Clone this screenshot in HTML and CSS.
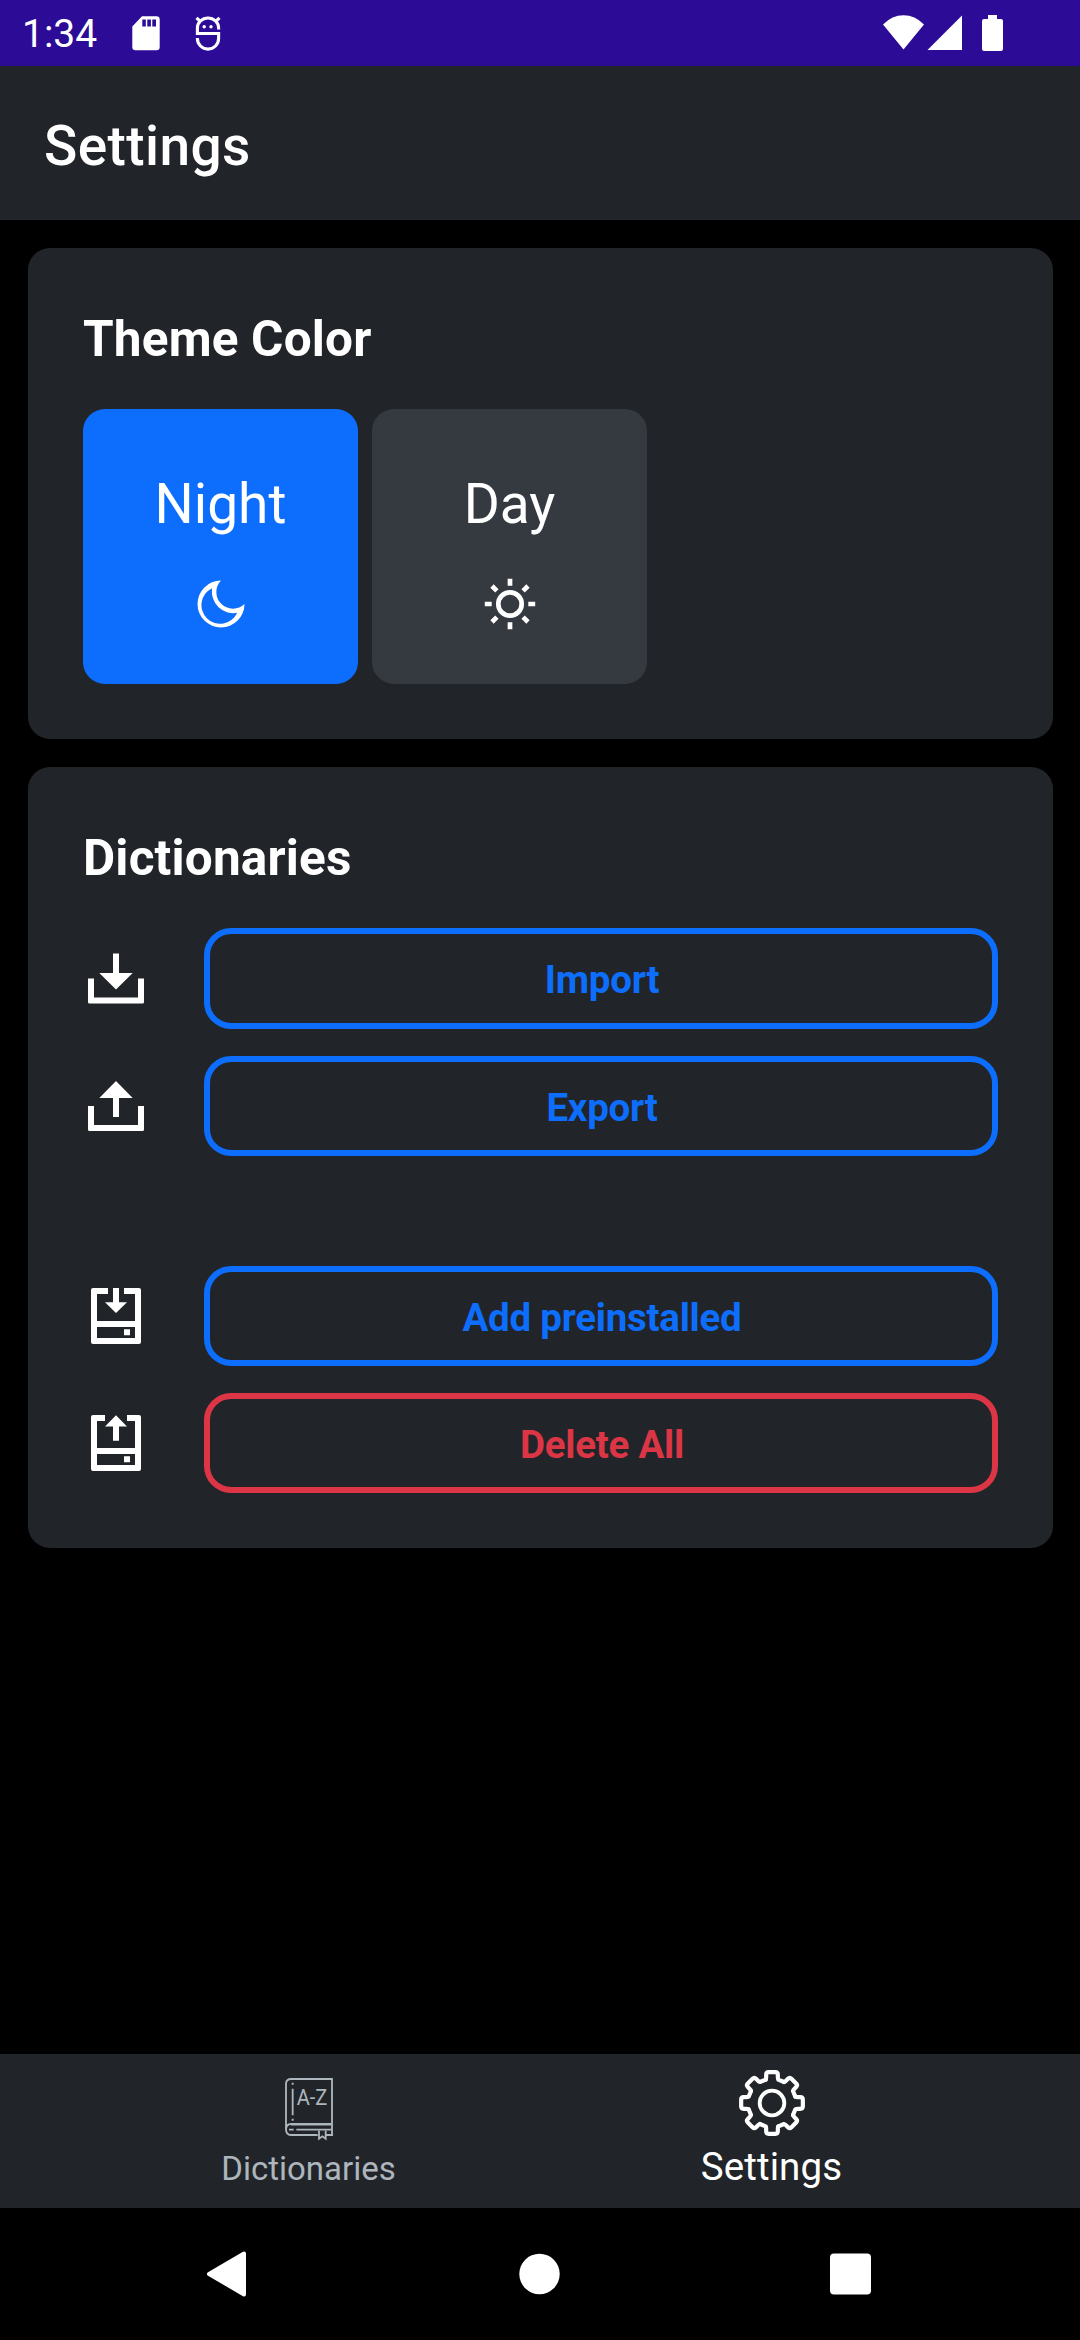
FILE: index.html
```html
<!DOCTYPE html>
<html lang="en">
<head>
<meta charset="utf-8">
<title>Settings</title>
<link rel="stylesheet" href="styles.css">
</head>
<body>
<div class="screen">
  <div class="status">
    <span class="clock">1:34</span>
    <svg class="sd" width="28" height="35" viewBox="0 0 28 35"><path fill="#fff" fill-rule="evenodd" d="M10 .3H24.500a3.200 3.200 0 0 1 3.200 3.200V31a3.200 3.200 0 0 1-3.200 3.200H3.500A3.200 3.200 0 0 1 .3 31V10.500ZM10.300 3.500v7h3.500v-7Zm5 0v7h3.600v-7Zm5 0v7h3.700v-7Z"/></svg>
    <svg class="bug" width="26" height="35" viewBox="0 0 26 35" fill="none" stroke="#fff" stroke-width="3.100"><path d="M23.600 13.500V12A10.600 10 0 0 0 2.400 12V17.500H23.600V22.500A10.600 10.600 0 0 1 2.400 22.500V22M1.500 1.800 5.500 5.500M24.500 1.800 20.500 5.500"/><circle cx="9.200" cy="10.700" r="1.700" fill="#fff" stroke="none"/><circle cx="16" cy="10.700" r="1.700" fill="#fff" stroke="none"/></svg>
    <svg class="radio" width="122" height="36" viewBox="0 0 122 36" fill="#fff"><path d="M0 9.500Q9 .3 20.500 .3T41 9.500L20.500 34.500ZM44.500 35 79 .5V35ZM105 0H114V4H118a2 2 0 0 1 2 2V34a2 2 0 0 1-2 2H101a2 2 0 0 1-2-2V6a2 2 0 0 1 2-2H105Z"/></svg>
  </div>
  <header class="appbar">Settings</header>
  <main class="content">
    <section class="card">
      <h2 class="title">Theme Color</h2>
      <div class="tiles">
        <div class="tile selected">
          <span>Night</span>
          <svg width="66" height="66" viewBox="187.500 571.500 66 66"><path fill="#fff" fill-rule="evenodd" d="M220.500 581A23.500 23.500 0 1 0 244 604.500 16.620 16.620 0 0 1 220.500 581ZM211.700 588.700A18.700 18.700 0 1 0 236.700 613.300 21.400 21.400 0 0 1 211.700 588.700Z"/></svg>
        </div>
        <div class="tile">
          <span>Day</span>
          <svg width="66" height="66" viewBox="-33 -33 66 66" fill="none" stroke="#fff" stroke-width="4.700"><circle r="11.700"/><path d="M0-25.200V-18.300M0 18.300V25.200M-25.200 0H-18.300M18.300 0H25.200M-18-18-13.100-13.100M18-18 13.100-13.100M-18 18-13.100 13.100M18 18 13.100 13.100"/></svg>
        </div>
      </div>
    </section>
    <section class="card">
      <h2 class="title">Dictionaries</h2>
      <div class="rows">
        <div class="row tall">
          <svg width="66" height="66" viewBox="0 .5 66 66" fill="#fff"><path d="M30 8H36V27.500H49.700L33 44 16.300 27.500H30ZM5 33H11V52H55V33H61V56.500a1.500 1.500 0 0 1-1.500 1.500H6.500A1.500 1.500 0 0 1 5 56.500Z"/></svg>
          <button class="btn">Import</button>
        </div>
        <div class="row">
          <svg width="66" height="66" viewBox="0 0 66 66" fill="#fff"><path d="M33 8 49.700 25H36V44H30V25H16.300ZM5 33H11V52H55V33H61V56.500a1.500 1.500 0 0 1-1.500 1.500H6.500A1.500 1.500 0 0 1 5 56.500Z"/></svg>
          <button class="btn">Export</button>
        </div>
        <div class="row spaced">
          <svg width="66" height="66" viewBox="0 0 66 66" fill="#fff"><path fill-rule="evenodd" d="M25 5V11H14V38H52V11H41V5H56a2 2 0 0 1 2 2V59a2 2 0 0 1-2 2H10a2 2 0 0 1-2-2V7a2 2 0 0 1 2-2ZM14 44V55H52V44ZM41 46.200H47V52.300H41Z"/><path d="M30 5H36V19.300H44L33 30 22 19.300H30Z"/></svg>
          <button class="btn">Add preinstalled</button>
        </div>
        <div class="row">
          <svg width="66" height="66" viewBox="0 0 66 66" fill="#fff"><path fill-rule="evenodd" d="M22 5V11H14V38H52V11H44V5H56a2 2 0 0 1 2 2V59a2 2 0 0 1-2 2H10a2 2 0 0 1-2-2V7a2 2 0 0 1 2-2ZM14 44V55H52V44ZM41 46.200H47V52.300H41Z"/><path d="M33 5.300 44 16.500H36V30.700H30V16.500H22Z"/></svg>
          <button class="btn danger">Delete All</button>
        </div>
      </div>
    </section>
  </main>
  <nav class="tabs">
    <div class="tab">
      <svg width="50" height="64" viewBox="249 111 150 192" fill="none" stroke="#adb5bd" stroke-width="5.500">
        <path d="M255 270V132Q255 117 271 117H393V285M255 270Q255 252 270 252H393M255 268Q255 285 270 285H350M376 285H396M286 269H393M264 269H278M275 146V226M354 272V296L364 289 374 296V272"/>
        <path d="M270 255H392" stroke-width="3"/>
        <path d="M275 128V134M275 236V242" stroke-width="6"/>
        <text x="287" y="196" font-size="64" textLength="92" lengthAdjust="spacingAndGlyphs" fill="#adb5bd" stroke="none" class="az">A-Z</text>
      </svg>
      <span>Dictionaries</span>
    </div>
    <div class="tab active">
      <svg width="68" height="68" viewBox="-102 -102 204 204" fill="none" stroke="#fff" stroke-width="12.500" stroke-linejoin="round" stroke-linecap="round">
        <defs><path id="tooth" d="M-19-70Q-17.500-72-17.500-78V-85Q-17.500-92.500-10-92.500H10Q17.500-92.500 17.500-85V-78Q17.500-72 19-70L36-63"/></defs>
        <use href="#tooth"/><use href="#tooth" transform="rotate(45)"/><use href="#tooth" transform="rotate(90)"/><use href="#tooth" transform="rotate(135)"/><use href="#tooth" transform="rotate(180)"/><use href="#tooth" transform="rotate(225)"/><use href="#tooth" transform="rotate(270)"/><use href="#tooth" transform="rotate(315)"/>
        <circle r="37" stroke-width="11.500"/>
      </svg>
      <span>Settings</span>
    </div>
  </nav>
  <div class="sysnav">
    <svg width="42" height="46" viewBox="0 0 42 46"><path fill="#fff" stroke="#fff" stroke-width="4" stroke-linejoin="round" d="M3 23 38 2.500V43.500Z"/></svg>
    <svg width="42" height="46" viewBox="0 0 42 46"><circle cx="21.500" cy="23" r="20.200" fill="#fff"/></svg>
    <svg width="42" height="46" viewBox="0 0 42 46"><rect x="0" y="2.500" width="41" height="41" rx="4" fill="#fff"/></svg>
  </div>
</div>
</body>
</html>
```
FILE: styles.css
```css
* { box-sizing: border-box; }
body {
  margin: 0;
  background: #000;
  color: #fff;
  font-family: Roboto, "Liberation Sans", sans-serif;
}
svg { display: block; flex: none; }
.screen {
  width: 1080px;
  height: 2340px;
  display: flex;
  flex-direction: column;
}
.status {
  height: 66px;
  padding: 0 75px 0 22px;
  background: #2c0b97;
  display: flex;
  align-items: center;
}
.clock {
  width: 110px;
  font-size: 39px;
  line-height: 46px;
  padding-top: 2px;
}
.bug { margin-left: 35px; }
.radio { margin-left: auto; }
.appbar {
  height: 154px;
  padding: 6px 44px 0;
  background: #212529;
  font-size: 55px;
  font-weight: 500;
  letter-spacing: 0.4px;
  line-height: 148px;
}
.content {
  flex: 1;
  padding: 28px 27px 0 28px;
  display: flex;
  flex-direction: column;
  gap: 28px;
}
.card {
  background: #212529;
  border-radius: 22px;
  padding: 55px;
}
.title {
  margin: 0 0 34px;
  font-size: 49.5px;
  font-weight: 700;
  letter-spacing: 0.18px;
  line-height: 72px;
}
.tiles { display: flex; gap: 14px; }
.tile {
  width: 275px;
  height: 275px;
  border-radius: 22px;
  background: #343a40;
  padding-top: 58px;
  display: flex;
  flex-direction: column;
  align-items: center;
  gap: 30px;
  font-size: 55px;
  line-height: 74px;
}
.tile.selected { background: #0d6efd; }
.rows { display: flex; flex-direction: column; gap: 27px; }
.row {
  height: 100px;
  display: flex;
  align-items: center;
  gap: 55px;
}
.row.tall { height: 101px; }
.row.spaced { margin-top: 83px; }
.btn {
  flex: 1;
  align-self: stretch;
  padding: 3px 0 0 2px;
  border: 6px solid #0d6efd;
  border-radius: 27px;
  background: none;
  color: #0d6efd;
  font: 700 38.5px/48px Roboto, "Liberation Sans", sans-serif;
  letter-spacing: -0.25px;
}
.btn.danger { border-color: #dc3545; color: #dc3545; }
.tabs {
  height: 154px;
  padding: 0 77px;
  background: #212529;
  display: flex;
}
.tab {
  flex: 1;
  padding-top: 23px;
  display: flex;
  flex-direction: column;
  align-items: center;
  gap: 8px;
  color: #adb5bd;
  font-size: 33px;
  line-height: 40px;
}
.tab.active {
  padding-top: 15px;
  gap: 7px;
  color: #fff;
  font-size: 38.5px;
  letter-spacing: 0.1px;
  line-height: 46px;
}
.az { font-family: Roboto, sans-serif; font-weight: 400; }
.sysnav {
  height: 132px;
  padding: 0 208px 0 206px;
  display: flex;
  align-items: center;
  justify-content: space-between;
}
```
